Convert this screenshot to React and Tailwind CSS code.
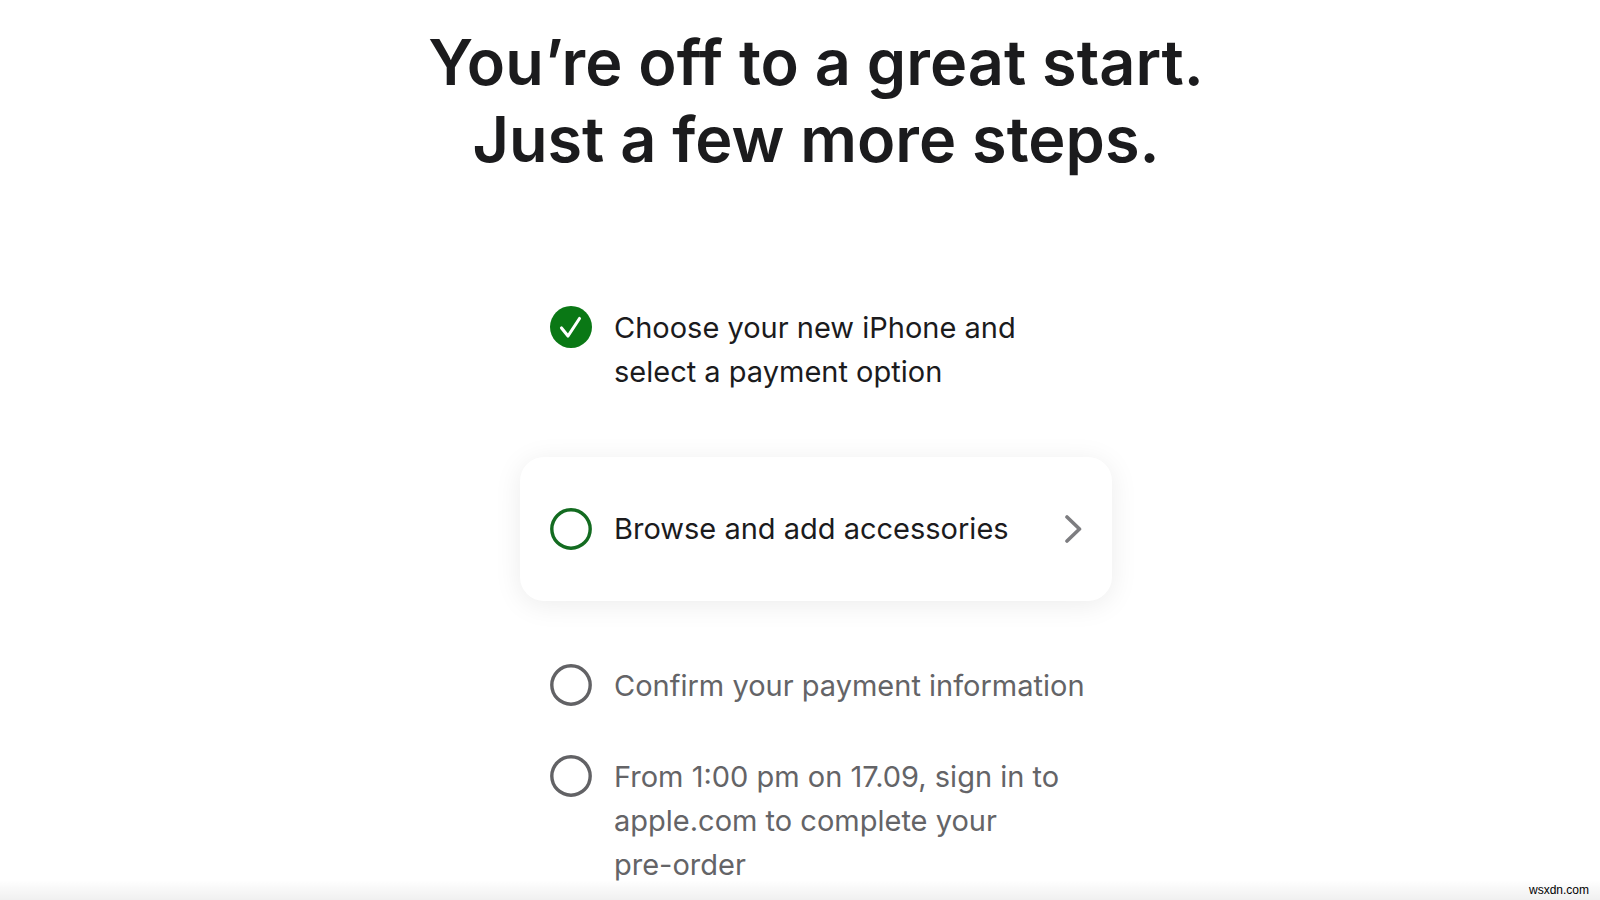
import React from 'react';

const steps = [
    { id: 1, status: 'done', lines: ['Choose your new iPhone and', 'select a payment option'] },
    { id: 2, status: 'current', lines: ['Browse and add accessories'] },
    { id: 3, status: 'todo', lines: ['Confirm your payment information'] },
    { id: 4, status: 'todo', lines: ['From 1:00 pm on 17.09, sign in to', 'apple.com to complete your', 'pre-order'] },
];

function StepIcon({ status }) {
    if (status === 'done') {
        return (
            <svg viewBox="0 0 42 42" className="size-[42px] shrink-0" aria-hidden="true">
                <circle cx="21" cy="21" r="21" fill="#0a7815" />
                <path d="M11.5 22 L18 30 L29.5 12.5" fill="none" stroke="#fff" strokeWidth="3.1" strokeLinecap="round" strokeLinejoin="round" />
            </svg>
        );
    }
    return (
        <svg viewBox="0 0 42 42" className="size-[42px] shrink-0" aria-hidden="true">
            <circle cx="21" cy="21" r="19.2" fill="none" stroke={status === 'current' ? '#136b20' : '#626265'} strokeWidth="3.4" />
        </svg>
    );
}

function StepText({ lines }) {
    return (
        <span>
            {lines.map(line => (
                <span key={line} className="block">{line}</span>
            ))}
        </span>
    );
}

function Step({ step }) {
    if (step.status === 'current') {
        return (
            <li className="my-4">
                <button
                    type="button"
                    className="flex w-full items-center gap-[22px] rounded-3xl bg-white px-[30px] py-[50px] text-left shadow-[0_4px_28px_rgba(0,0,0,0.08)]"
                >
                    <StepIcon status={step.status} />
                    <StepText lines={step.lines} />
                    <svg viewBox="0 0 18 28" className="ml-auto h-7 w-[18px] shrink-0" fill="none" stroke="#7d7d80" strokeWidth="3.6" strokeLinecap="round" strokeLinejoin="round" aria-hidden="true">
                        <path d="M3 2 L15.5 14 L3 26" />
                    </svg>
                </button>
            </li>
        );
    }
    return (
        <li className={`flex items-start gap-[22px] pl-[30px] ${step.status === 'todo' ? 'text-[#646467]' : ''}`}>
            <StepIcon status={step.status} />
            <StepText lines={step.lines} />
        </li>
    );
}

function App() {
    return (
        <div className="relative min-h-screen bg-white font-['Inter','Liberation_Sans',sans-serif] text-[#1b1b1d]">
            <main className="flex flex-col items-center pt-6 pl-8">
                <h1 className="text-center text-[63px] leading-[77px] font-semibold">
                    You’re off to a great start.
                    <br />
                    Just a few more steps.
                </h1>
                <ol className="mt-[128px] flex w-full max-w-[592px] flex-col gap-[47px] text-[29px] leading-[44px]">
                    {steps.map(step => (
                        <Step key={step.id} step={step} />
                    ))}
                </ol>
            </main>
            <div className="pointer-events-none absolute inset-x-0 bottom-0 h-5 bg-linear-to-b from-black/0 to-black/6" />
            <a href="https://wsxdn.com" className="absolute right-[11px] bottom-[2px] font-['Liberation_Sans',sans-serif] text-xs text-black">
                wsxdn.com
            </a>
        </div>
    );
}

export default App;
